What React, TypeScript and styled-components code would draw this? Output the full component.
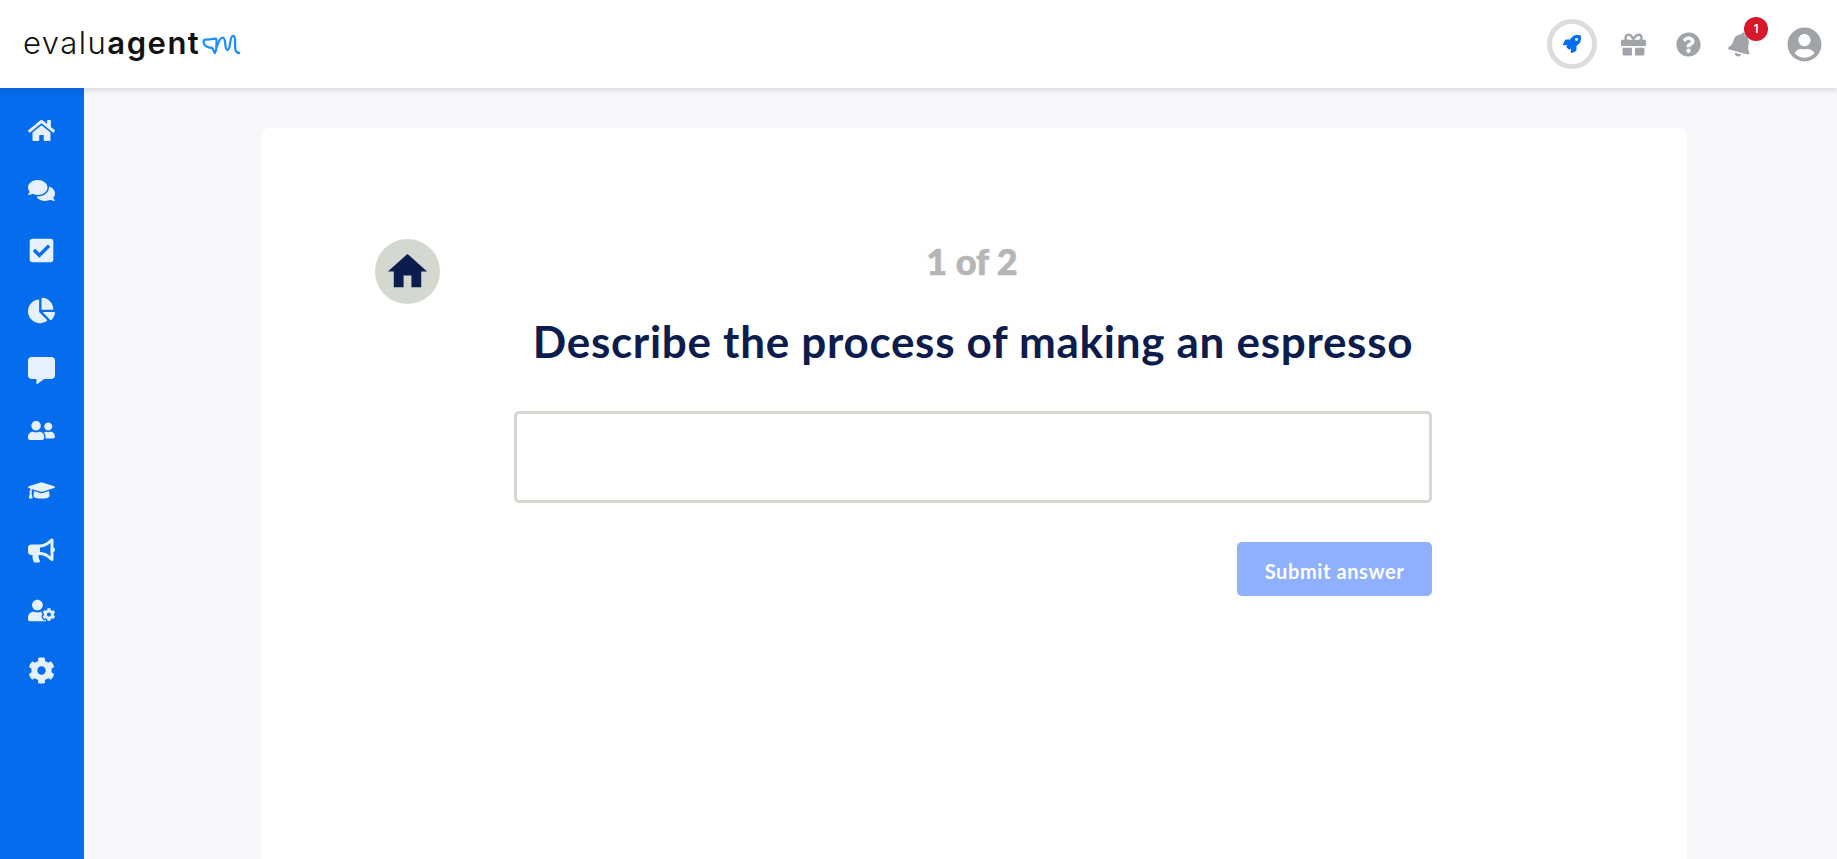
import { createGlobalStyle, styled } from "styled-components";
import {
  FaBell,
  FaBullhorn,
  FaChartPie,
  FaCheckSquare,
  FaCog,
  FaCommentAlt,
  FaComments,
  FaGift,
  FaGraduationCap,
  FaHome,
  FaQuestionCircle,
  FaRocket,
  FaUserCircle,
  FaUserCog,
  FaUserFriends,
} from "react-icons/fa";
import { MdHome } from "react-icons/md";

const navIcons = [
  FaHome,
  FaComments,
  FaCheckSquare,
  FaChartPie,
  FaCommentAlt,
  FaUserFriends,
  FaGraduationCap,
  FaBullhorn,
  FaUserCog,
  FaCog,
];

export default function App() {
  return (
    <Page>
      <GlobalStyle />
      <TopBar>
        <Logo>
          <LogoLight>evalu</LogoLight>
          <LogoBold>agent</LogoBold>
          <LogoWave width="40" height="24" viewBox="0 0 40 24" fill="none">
            <path d="M3 7.6C7 7.6 11 7 13.4 6.6C14.4 6.6 14.6 7.4 14.6 9L14.4 16C14.2 18 13.6 20 12.8 21L10.4 16.2C8 15.8 5.6 15 3.6 14C1.4 12.6 0.8 8 3 7.6Z" />
            <path d="M14.5 15C16.5 11 17.5 5.6 20.8 5.6C24.5 5.6 22 18 25.6 18C29 18 27.2 3.8 31 3.8C35 3.8 31.5 16.5 34.2 19.5C35 20.6 36 21 37.2 21" />
          </LogoWave>
        </Logo>
        <TopActions>
          <RocketRing>
            <FaRocket size={18} />
          </RocketRing>
          <GiftButton>
            <FaGift size={25} />
          </GiftButton>
          <HelpButton>
            <FaQuestionCircle size={25} />
          </HelpButton>
          <BellButton>
            <BellIcon size={25} />
            <Badge>1</Badge>
          </BellButton>
          <UserButton>
            <FaUserCircle size={35} />
          </UserButton>
        </TopActions>
      </TopBar>
      <Body>
        <Sidebar>
          {navIcons.map((Icon, i) => (
            <NavItem key={i}>
              <Icon size={27} />
            </NavItem>
          ))}
        </Sidebar>
        <Main>
          <Card>
            <Question>
              <HomeBadge>
                <MdHome size={47} />
              </HomeBadge>
              <Progress>1 of 2</Progress>
              <Title>Describe the process of making an espresso</Title>
              <AnswerInput type="text" />
              <Actions>
                <SubmitButton disabled>Submit answer</SubmitButton>
              </Actions>
            </Question>
          </Card>
        </Main>
      </Body>
    </Page>
  );
}

const GlobalStyle = createGlobalStyle`
  html, body {
    margin: 0;
    padding: 0;
    height: 100%;
    overflow: hidden;
  }
  body {
    font-family: "Lato", "Liberation Sans", sans-serif;
    background: #f6f8fc;
  }
`;

const Page = styled.div`
  display: flex;
  flex-direction: column;
  height: 100vh;
`;

const TopBar = styled.header`
  position: relative;
  z-index: 1;
  display: flex;
  align-items: center;
  justify-content: space-between;
  flex: 0 0 88px;
  padding: 0 15px 0 23px;
  background: #fff;
  box-shadow: 0 1px 7px rgba(30, 30, 40, 0.2);
`;

const Logo = styled.div`
  display: flex;
  align-items: center;
  margin-top: -3px;
  font-family: "Inter", sans-serif;
  font-size: 31px;
  letter-spacing: 1.5px;
  color: #111;
  line-height: 1;
`;

const LogoLight = styled.span`
  font-weight: 300;
`;

const LogoBold = styled.span`
  font-weight: 600;
`;

const LogoWave = styled.svg`
  margin-left: 2px;
  margin-top: 2px;
  stroke: #1f8fff;
  stroke-width: 2.3;
  stroke-linecap: round;
  stroke-linejoin: round;
`;

const TopActions = styled.div`
  display: flex;
  align-items: center;
`;

const RocketRing = styled.div`
  display: flex;
  align-items: center;
  justify-content: center;
  box-sizing: border-box;
  width: 50px;
  height: 50px;
  margin-right: 23px;
  border: 5px solid #dcdcdc;
  border-radius: 50%;
  color: #066ff0;
`;

const IconButton = styled.div`
  display: flex;
  align-items: center;
  justify-content: center;
  color: #a0a3a8;
`;

const GiftButton = styled(IconButton)`
  width: 26px;
  margin-right: 29px;
`;

const HelpButton = styled(IconButton)`
  width: 26px;
  margin-right: 26px;
`;

const BellButton = styled(IconButton)`
  position: relative;
  width: 26px;
  margin-right: 34px;
`;

const BellIcon = styled(FaBell)`
  transform: rotate(15deg);
`;

const Badge = styled.span`
  position: absolute;
  top: -15px;
  left: 17px;
  width: 24px;
  height: 24px;
  border-radius: 50%;
  background: #d7172a;
  color: #fff;
  font-family: "Inter", sans-serif;
  font-size: 12px;
  font-weight: 600;
  line-height: 24px;
  text-align: center;
`;

const UserButton = styled(IconButton)`
  width: 35px;
`;

const Body = styled.div`
  display: flex;
  flex: 1;
  min-height: 0;
`;

const Sidebar = styled.nav`
  display: flex;
  flex-direction: column;
  flex: 0 0 84px;
  box-sizing: border-box;
  padding-top: 12px;
  background: #056cee;
`;

const NavItem = styled.div`
  display: flex;
  align-items: center;
  justify-content: center;
  height: 60px;
  padding-right: 2px;
  color: #e6f1ff;
`;

const Main = styled.main`
  display: flex;
  flex: 1;
  min-width: 0;
  padding: 40px 150px 0 178px;
`;

const Card = styled.section`
  flex: 1;
  padding: 0 255px 0 252px;
  background: #fff;
  border-radius: 8px 8px 0 0;
`;

const Question = styled.div`
  position: relative;
  display: flex;
  flex-direction: column;
  align-items: center;
  padding-top: 111px;
`;

const HomeBadge = styled.div`
  position: absolute;
  top: 111px;
  left: -139px;
  display: flex;
  align-items: center;
  justify-content: center;
  width: 65px;
  height: 65px;
  border-radius: 50%;
  background: #d3d8d0;
  color: #0c1c4c;
`;

const Progress = styled.div`
  padding-right: 2px;
  font-size: 36px;
  font-weight: 900;
  line-height: 44px;
  color: #b6b6b6;
  -webkit-text-stroke: 0.6px #b6b6b6;
`;

const Title = styled.h1`
  margin: 31px 0 0;
  font-size: 44px;
  font-weight: 700;
  letter-spacing: 0.7px;
  line-height: 54px;
  color: #0c1c4c;
`;

const AnswerInput = styled.input`
  box-sizing: border-box;
  width: 100%;
  height: 92px;
  margin-top: 43px;
  border: 3px solid #d3d8d0;
  border-radius: 5px;
  background: #fff;
  outline: none;
`;

const Actions = styled.div`
  display: flex;
  justify-content: flex-end;
  width: 100%;
  margin-top: 39px;
`;

const SubmitButton = styled.button`
  width: 195px;
  height: 54px;
  padding: 3px 0 0;
  border: none;
  border-radius: 5px;
  background: #8fb0ff;
  color: #fff;
  font-family: "Lato", sans-serif;
  font-size: 20px;
  font-weight: 700;
  letter-spacing: 0.6px;
`;
